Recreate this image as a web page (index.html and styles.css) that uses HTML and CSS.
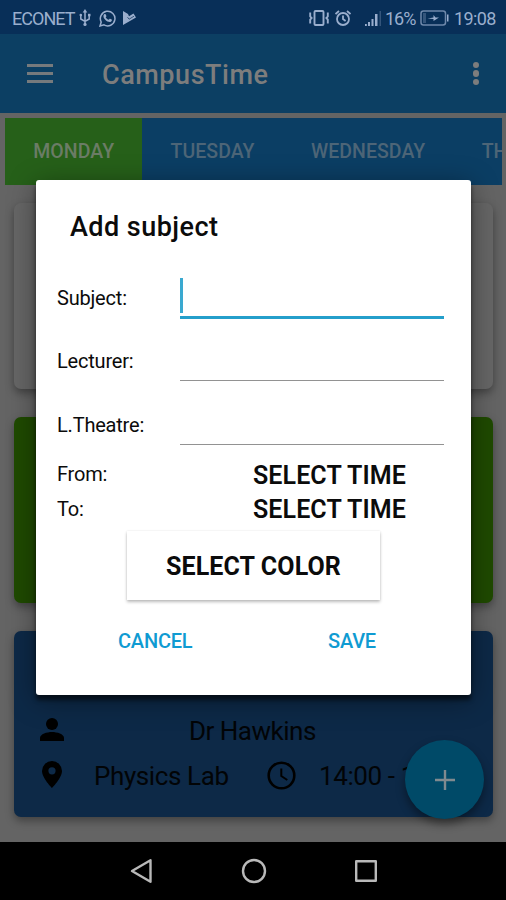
FILE: index.html
```html
<!DOCTYPE html>
<html lang="en">
<head>
<meta charset="utf-8">
<title>CampusTime</title>
<link rel="stylesheet" href="styles.css">
</head>
<body>
<div class="screen">
  <header class="status">
    <div class="status-left">
      <span class="carrier">ECONET</span>
      <svg class="usb" width="12" height="18" viewBox="0 0 12 18" fill="none" stroke="currentColor" stroke-width="1.5"><path d="M6 2v13M1.8 6v4L6 12.5 10.2 10V6"/><path d="M6 0 3.7 3.6h4.6z" fill="currentColor" stroke="none"/><circle cx="6" cy="15.4" r="1.6" fill="currentColor" stroke="none"/><circle cx="1.8" cy="6" r="1.3" fill="currentColor" stroke="none"/><path d="M9 4.8h2.5v2.5H9z" fill="currentColor" stroke="none"/></svg>
      <svg class="whatsapp" width="17" height="17" viewBox="0 0 17 17"><path d="M1 16l1.2-4A7.3 7.3 0 1 1 5 14.9z" fill="none" stroke="currentColor" stroke-width="1.5"/><path d="M5.2 4.3c.8-.6 1.3-.5 1.6.2l.6 1.4c.2.5-.5 1-.7 1.3.7 1.3 1.7 2.1 3 2.6.5-.4.9-1.3 1.4-1l1.6.8c.7.4-.1 1.8-.8 2.2-2.9 1.3-8.2-3.1-7.4-6.3.1-.5.3-.9.7-1.2z" fill="currentColor"/></svg>
      <svg class="play" width="13" height="14" viewBox="0 0 13 14"><path d="M0 0l5 3 1 2.200L10.500 2.500 13 6.500 0 14z" fill="currentColor"/><path d="M4.500 6.200l1.600 2L11 5.200" fill="none" stroke="#082f58" stroke-width=".7"/></svg>
    </div>
    <div class="status-right">
      <svg class="vibrate" width="20" height="16" viewBox="0 0 20 16" fill="none" stroke="currentColor" stroke-width="1.9"><rect x="5.5" y="1" width="9" height="14" rx="1"/><path d="M1.200 2.500v4l1.400 1.500-1.400 1.500v4M18.800 2.500v4l-1.400 1.500 1.400 1.500v4"/></svg>
      <svg class="alarm" width="16" height="16" viewBox="0 0 16 16" fill="none" stroke="currentColor" stroke-width="1.8"><circle cx="8" cy="9" r="6"/><path d="M.5 4L4 1M15.500 4L12 1M8 5.500V9l2.600 2"/></svg>
      <svg class="signal" width="16" height="17" viewBox="0 0 16 17" fill="currentColor"><path d="M0 14h1.800v2H0zM3 12h2v4H3zM6.500 9h2v7h-2zM10 4h2.500v12H10z"/><path d="M14.500 1H16v15h-1.500z" opacity=".3"/></svg>
      <span class="percent">16%</span>
      <svg class="battery" width="29" height="16" viewBox="0 0 29 16"><rect x="1" y="1" width="24.500" height="14" rx="2.500" fill="none" stroke="currentColor" stroke-width="1.500" opacity=".7"/><path d="M3 3h3v10H3z" fill="currentColor" opacity=".3"/><path d="M27 4.500h1.500v7H27z" fill="currentColor"/><path d="M7.500 8.500l6-1V5l2 2.500H19l-5.500 3.500V9z" fill="currentColor"/></svg>
      <span class="clock">19:08</span>
    </div>
  </header>

  <div class="appbar">
    <div class="hamburger"><i></i><i></i><i></i></div>
    <h1>CampusTime</h1>
    <div class="more"><i></i><i></i><i></i></div>
  </div>

  <nav class="tabs">
    <span class="tab active">MONDAY</span>
    <span class="tab">TUESDAY</span>
    <span class="tab">WEDNESDAY</span>
    <span class="tab">THURSDAY</span>
  </nav>

  <main class="cards">
    <article class="card plain"></article>
    <article class="card green"></article>
    <article class="card blue">
      <div class="row lecturer">
        <svg width="24" height="24" viewBox="0 0 24 24"><circle cx="12" cy="6" r="6"/><path d="M0 23v-3c0-4 7-6 12-6s12 2 12 6v3z"/></svg>
        <span class="name">Dr Hawkins</span>
      </div>
      <div class="row place">
        <svg width="20" height="27" viewBox="0 0 20 27"><path fill-rule="evenodd" d="M10 0A10 10 0 0 0 0 10c0 7 10 17 10 17s10-10 10-17A10 10 0 0 0 10 0zm0 6.200a3.600 3.600 0 1 1 0 7.200 3.600 3.600 0 0 1 0-7.200z"/></svg>
        <span class="room">Physics Lab</span>
        <svg class="time-icon" width="29" height="29" viewBox="0 0 29 29" fill="none" stroke="#000"><circle cx="14.500" cy="14.500" r="12.800" stroke-width="2.600"/><path d="M14.300 7.500V15l6 4" stroke-width="2"/></svg>
        <span class="hours">14:00 - 16:00</span>
      </div>
    </article>
  </main>

  <footer class="navbar">
    <svg width="23" height="26" viewBox="0 0 23 26"><path d="M20.500 2.200v21.600L2 13z"/></svg>
    <svg width="26" height="26" viewBox="0 0 26 26"><circle cx="13" cy="13" r="11"/></svg>
    <svg width="22" height="22" viewBox="0 0 22 22"><path d="M1.200 1.200h19.600v19.600H1.200z"/></svg>
  </footer>

  <div class="fab"><svg width="22" height="22" viewBox="0 0 22 22"><path d="M11 1v20M1 11h20" stroke="#808a8f" stroke-width="2.400"/></svg></div>

  <section class="dialog">
    <h2>Add subject</h2>
    <div class="field"><label>Subject:</label><div class="input focus"><i class="caret"></i></div></div>
    <div class="field"><label>Lecturer:</label><div class="input"></div></div>
    <div class="field"><label>L.Theatre:</label><div class="input"></div></div>
    <div class="time first"><label>From:</label><span>SELECT TIME</span></div>
    <div class="time"><label>To:</label><span>SELECT TIME</span></div>
    <div class="color">SELECT COLOR</div>
    <div class="actions"><span class="cancel">CANCEL</span><span class="save">SAVE</span></div>
  </section>
</div>
</body>
</html>
```
FILE: styles.css
```css
* { box-sizing: border-box; }
body { margin: 0; font-family: Roboto, "Liberation Sans", sans-serif; }
h1, h2 { margin: 0; font-weight: 500; }
svg { display: block; flex: none; }
.screen {
  position: relative;
  width: 506px;
  height: 900px;
  overflow: hidden;
  background: #646464;
  display: flex;
  flex-direction: column;
}

.status {
  height: 34px;
  flex: none;
  background: #082f58;
  color: #9aaecd;
  display: flex;
  justify-content: space-between;
  padding: 2px 10px 0 12px;
  font-size: 18px;
}
.status-left, .status-right { display: flex; align-items: center; }
.carrier { width: 62px; letter-spacing: -0.95px; }
.usb { margin-left: 5px; }
.whatsapp { margin-left: 8px; }
.play { margin-left: 7px; }
.alarm { margin-left: 6px; }
.signal { margin-left: 14px; }
.percent { margin-left: 4px; width: 31px; letter-spacing: -1px; }
.battery { margin-left: 4px; }
.clock { margin-left: 5px; width: 42px; letter-spacing: -0.6px; }

.appbar {
  height: 79px;
  flex: none;
  background: #0c3f63;
  display: flex;
  align-items: center;
  padding: 0 27px;
  color: #7d7d7d;
}
.hamburger { width: 26px; display: flex; flex-direction: column; gap: 5px; margin-bottom: 1px; }
.hamburger i { height: 3px; background: #767a7d; }
.appbar h1 { margin-left: 49px; flex: 1; font-size: 27px; letter-spacing: 0.55px; line-height: 32px; padding-top: 3px; }
.more { display: flex; flex-direction: column; gap: 2px; }
.more i { width: 6.5px; height: 6.5px; border-radius: 50%; background: #7d7d7d; }

.tabs {
  height: 67px;
  flex: none;
  margin: 5px 4px 0 5px;
  background: #0b3e64;
  display: flex;
  overflow: hidden;
}
.tab {
  flex: none;
  padding: 0 28.2px;
  line-height: 68px;
  font-size: 19.5px;
  font-weight: 500;
  letter-spacing: 0.05px;
  color: #4d6577;
}
.tab.active { background: #266019; color: #6b7c66; }

.cards { flex: 1; display: flex; flex-direction: column; gap: 28px; padding: 18px 13px 0 14px; }
.card { height: 186px; flex: none; border-radius: 7px; box-shadow: 0 4px 8px rgba(0,0,0,.35); }
.plain { background: #666; }
.green { background: #1f4a00; }
.blue { background: #0d2947; padding: 84px 0 0 26px; font-size: 26px; color: #020406; }
.row { display: flex; align-items: center; white-space: nowrap; }
.lecturer { height: 32px; }
.lecturer svg { margin-bottom: 2px; }
.name { margin-left: 125px; letter-spacing: -0.5px; }
.place { height: 46px; margin-top: 6px; padding-left: 2px; }
.place svg:first-child { margin-bottom: 3px; }
.room { margin-left: 32px; width: 138px; letter-spacing: -0.4px; }
.time-icon { margin-left: 35px; margin-bottom: 2px; }
.hours { margin-left: 23px; letter-spacing: -0.4px; }

.navbar { height: 58px; flex: none; background: #000; display: flex; align-items: center; padding-left: 130px; }
.navbar svg { fill: none; stroke: #b9b9b9; stroke-width: 2.4; stroke-linejoin: round; }
.navbar svg + svg { margin-left: 87.5px; }
.navbar svg + svg + svg { margin-left: 88.5px; }

.fab {
  position: absolute;
  left: 405px;
  top: 740px;
  width: 79px;
  height: 79px;
  border-radius: 50%;
  background: #004a68;
  box-shadow: 0 5px 10px rgba(0,0,0,.4);
  display: flex;
  align-items: center;
  justify-content: center;
}

.dialog {
  position: absolute;
  left: 36px;
  top: 180px;
  width: 435px;
  height: 515px;
  border-radius: 3px;
  background: #fff;
  color: #0b0b0b;
  box-shadow: 0 5px 4px rgba(0,0,0,.55), 0 5px 28px rgba(0,0,0,.4);
  padding: 31px 27px 0 21px;
}
.dialog h2 { padding-left: 13px; font-size: 27px; font-weight: 500; line-height: 32px; height: 33px; letter-spacing: 0.45px; }
.field { height: 64px; display: flex; }
.field label, .time label { width: 123px; flex: none; font-size: 20px; letter-spacing: -0.2px; }
.field label { padding-top: 30px; line-height: 24px; }
.dialog h2 + .field { height: 75px; }
.dialog h2 + .field label { padding-top: 42px; }
.input { flex: 1; border-bottom: 1.5px solid #929292; margin-bottom: 2px; }
.input.focus { border-bottom: 3px solid #249fcb; margin-bottom: 0; padding-top: 34px; }
.caret { display: block; width: 3px; height: 35px; background: #3aa9d0; }
.time { height: 34px; display: flex; line-height: 34px; }
.time.first { margin-top: 11px; }
.time.first label { line-height: 33px; }
.time span { margin-left: 73px; font-size: 25px; font-weight: 600; line-height: 35px; letter-spacing: 0.1px; }
.color {
  width: 253px;
  height: 69px;
  margin: 5px 0 0 70px;
  line-height: 72px;
  text-align: center;
  font-size: 25px;
  font-weight: 700;
  letter-spacing: 0.1px;
  background: #fff;
  box-shadow: 0 2px 3px rgba(0,0,0,.26), 0 0 2px rgba(0,0,0,.08);
}
.actions { margin-top: 28px; display: flex; color: #0f9bd2; font-size: 20px; font-weight: 500; line-height: 26px; letter-spacing: -0.2px; }
.cancel { margin-left: 61px; width: 210px; }
```
